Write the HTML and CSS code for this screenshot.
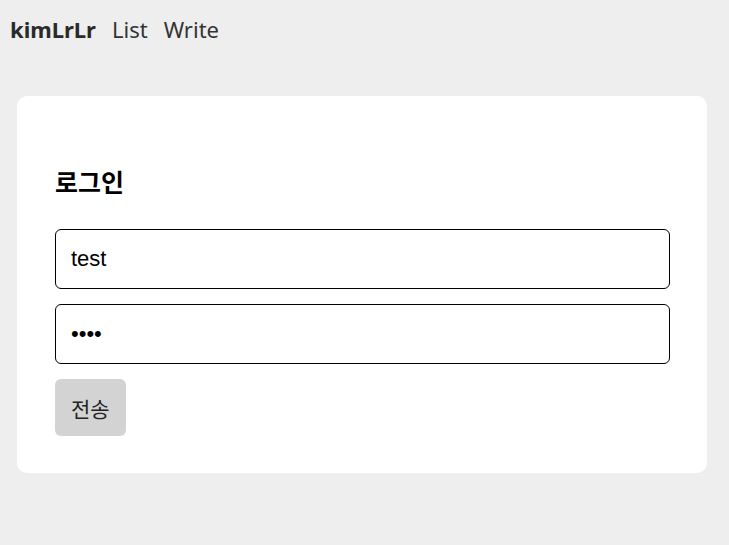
FILE: index.html
```html
<!DOCTYPE html>
<html lang="ko">
<head>
<meta charset="utf-8">
<title>Login</title>
<link rel="stylesheet" href="styles.css">
</head>
<body>
<nav class="nav">
  <a class="brand" href="#">kimLrLr</a>
  <a class="link" href="#">List</a>
  <a class="link" href="#">Write</a>
</nav>
<main class="card">
  <h2 class="title">로그인</h2>
  <form class="form">
    <input class="field" type="text" value="test">
    <input class="field" type="password" value="test">
    <button class="submit" type="button">전송</button>
  </form>
</main>
</body>
</html>
```
FILE: styles.css
```css
html, body {
  margin: 0;
  padding: 0;
  background: #eeeeee;
}
body {
  font-family: "Noto Sans", "Noto Sans CJK KR", sans-serif;
}
.nav {
  display: flex;
  align-items: baseline;
  gap: 16px;
  padding: 13px 10px 0;
  height: 43px;
  font-size: 22px;
  line-height: 32px;
}
.nav a {
  text-decoration: none;
  color: #333;
}
.nav .brand {
  font-weight: 700;
  color: #2a2a2a;
}
.card {
  margin: 40px 22px 0 17px;
  background: #fff;
  border-radius: 10px;
  padding: 68px 37px 37px 38px;
}
.title {
  margin: 0 0 31px;
  font-family: "Noto Sans CJK KR", sans-serif;
  font-size: 25px;
  line-height: 34px;
  font-weight: 700;
  color: #000;
}
.form {
  display: flex;
  flex-direction: column;
  align-items: flex-start;
  gap: 15px;
}
.field {
  box-sizing: border-box;
  width: 100%;
  height: 60px;
  border: 1px solid #000;
  border-radius: 6px;
  padding: 0 15px;
  font-family: "Liberation Sans", Arial, sans-serif;
  font-size: 22px;
  color: #000;
  background: #fff;
  outline: none;
}
.submit {
  height: 57px;
  padding: 0 16px;
  border: none;
  border-radius: 6px;
  background: #d3d3d3;
  font-family: "Noto Sans CJK KR", sans-serif;
  font-size: 21px;
  color: #222;
}
```
